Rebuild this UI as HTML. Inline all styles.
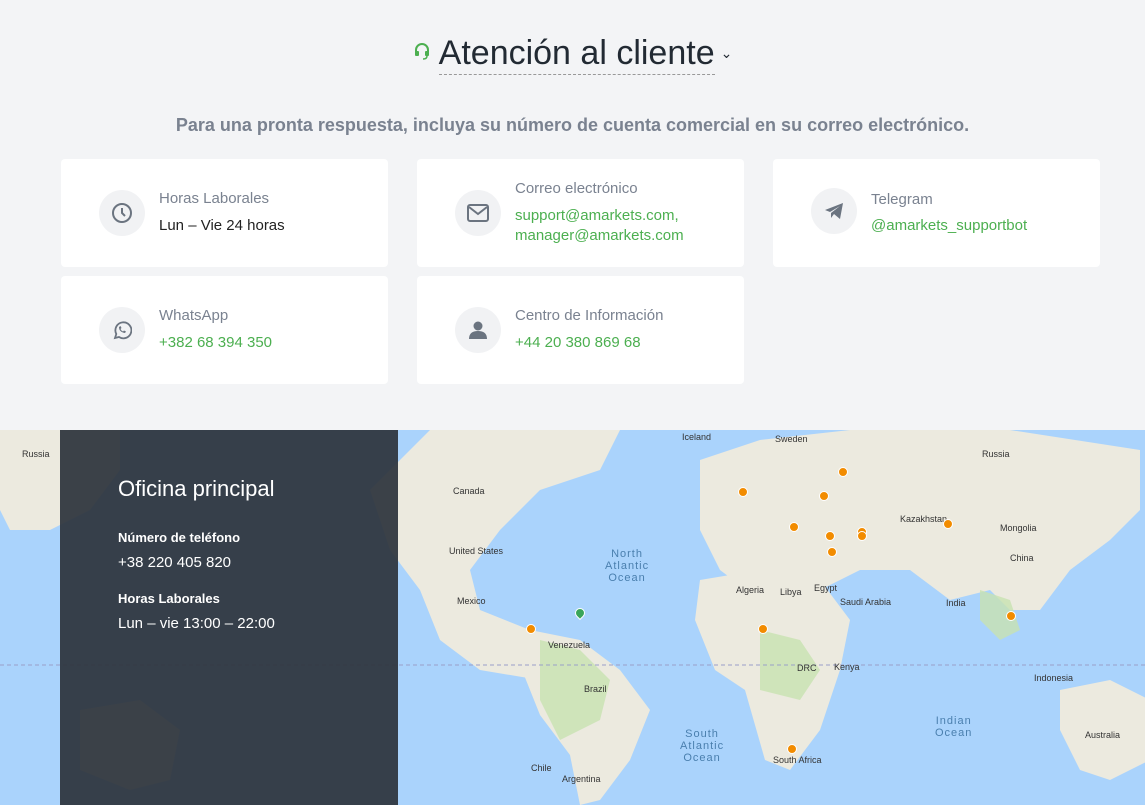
<!DOCTYPE html>
<html><head><meta charset="utf-8"><style>
*{box-sizing:border-box;margin:0;padding:0}
body{width:1145px;height:805px;overflow:hidden;background:#f3f4f6;font-family:"Liberation Sans",sans-serif;position:relative}
.title{position:absolute;top:34px;left:0;width:1145px;text-align:center;font-size:34px;color:#222a33}
.title span.t{border-bottom:1px dashed #999;padding-bottom:2px}
.sub{position:absolute;top:115px;width:1145px;text-align:center;font-size:18px;color:#7a8290;font-weight:bold}
.card{position:absolute;background:#fff;border-radius:4px;width:327px;height:108px}
.ic{position:absolute;left:38px;width:46px;height:46px;border-radius:50%;background:#f1f2f4;display:flex;align-items:center;justify-content:center}
.lab{position:absolute;left:98px;font-size:15px;color:#7a8290}
.val{position:absolute;left:98px;font-size:15px;line-height:20px;color:#222}
.g{color:#4caf50}
.map{position:absolute;top:430px;left:0;width:1145px;height:375px;background:#aad3fc;overflow:hidden}
.panel{position:absolute;top:430px;left:60px;width:338px;height:375px;background:rgba(45,52,60,.93);color:#fff}
.ml{position:absolute;font-size:9px;color:#333}
.ol{position:absolute;font-size:11px;color:#4a7fae;text-align:center;letter-spacing:1px}
.dot{position:absolute;width:10px;height:10px;border-radius:50%;background:#f28c00;border:1px solid #fff}
</style></head><body>
<div class="title"><svg width="18" height="18" viewBox="0 0 18 18" style="vertical-align:4px;margin-right:8px"><path d="M3 10V8a6 6 0 0112 0v2" fill="none" stroke="#4caf50" stroke-width="2"/><rect x="2" y="9" width="4" height="5" rx="1" fill="#4caf50"/><rect x="12" y="9" width="4" height="5" rx="1" fill="#4caf50"/><path d="M14 14q0 3-4 3" fill="none" stroke="#4caf50" stroke-width="1.5"/></svg><span class="t">Atención al cliente</span><span style="font-size:14px;vertical-align:6px;margin-left:6px">⌄</span></div>
<div class="sub">Para una pronta respuesta, incluya su número de cuenta comercial en su correo electrónico.</div>

<div class="card" style="left:61px;top:159px"><div class="ic" style="top:31px"><svg width="22" height="22" viewBox="0 0 22 22"><circle cx="11" cy="11" r="9" fill="none" stroke="#6b7480" stroke-width="2"/><path d="M11 6v5l3 3" fill="none" stroke="#6b7480" stroke-width="2"/></svg></div><div class="lab" style="top:31px">Horas Laborales</div><div class="val" style="top:57px">Lun – Vie 24 horas</div></div>
<div class="card" style="left:417px;top:159px"><div class="ic" style="top:31px"><svg width="22" height="18" viewBox="0 0 22 18"><rect x="1" y="1" width="20" height="16" rx="2" fill="none" stroke="#6b7480" stroke-width="2"/><path d="M2 3l9 7 9-7" fill="none" stroke="#6b7480" stroke-width="2"/></svg></div><div class="lab" style="top:21px">Correo electrónico</div><div class="val g" style="top:47px">support@amarkets.com,<br>manager@amarkets.com</div></div>
<div class="card" style="left:773px;top:159px"><div class="ic" style="top:29px"><svg width="20" height="18" viewBox="0 0 20 18"><path d="M1 8L19 1 16 17 10 12 7 16 7 11 16 4 6 10z" fill="#6b7480"/></svg></div><div class="lab" style="top:32px">Telegram</div><div class="val g" style="top:57px">@amarkets_supportbot</div></div>
<div class="card" style="left:61px;top:276px"><div class="ic" style="top:31px"><svg width="20" height="20" viewBox="0 0 20 20"><path d="M3 18l1.3-4A8 8 0 1 1 7 17z" fill="none" stroke="#6b7480" stroke-width="1.8"/><path d="M7 7q0 5 6 6l1-1.5-2-1-1 1q-2-1-2.5-2.5l1-1-1-2z" fill="#6b7480"/></svg></div><div class="lab" style="top:31px">WhatsApp</div><div class="val g" style="top:57px">+382 68 394 350</div></div>
<div class="card" style="left:417px;top:276px"><div class="ic" style="top:31px"><svg width="20" height="20" viewBox="0 0 20 20"><circle cx="10" cy="6" r="4.5" fill="#6b7480"/><path d="M1 19q0-8 9-8t9 8z" fill="#6b7480"/></svg></div><div class="lab" style="top:31px">Centro de Información</div><div class="val g" style="top:57px">+44 20 380 869 68</div></div>

<div class="map"><svg width="1145" height="375" viewBox="0 0 1145 375">
<g fill="#eceadf">
<path d="M430 0h190l-20 40-60 20-40 40-30 40 10 40 50 20 60 40-10 30-40-20-60-10-40-30-20-50-30-40-20-60z"/>
<path d="M530 200l50 10 40 30 30 40-20 50-30 40-20 5-10-50-30-40-20-50z"/>
<path d="M700 30l60-20 90-10 160 0 130 20v60l-30 30-40 30-30 40-30 0-20-20-40 10-40-30-50 0-40 20-60 10-40-30-20-40z"/>
<path d="M700 150l60-10 60 10 30 40-10 50-20 60-30 40-25-10-20-70-30-20-20-50z"/>
<path d="M1060 260l50-10 40 20v60l-40 20-30-10-20-40z"/>
<path d="M0 0h120v40l-30 40-40 20-40 0-10-20z"/>
<path d="M80 280l60-10 40 30-10 50-40 10-50-20z"/>
</g>
<g fill="#c8e2b0" opacity=".8"><path d="M540 210l40 10 30 30-10 40-40 20-20-40z"/><path d="M760 200l40 10 20 30-20 30-40-10z"/><path d="M980 160l30 10 10 30-20 10-20-20z"/></g>
<line x1="0" y1="235" x2="1145" y2="235" stroke="#9a9fc8" stroke-dasharray="4 3"/>
</svg>
<div class="ol" style="left:605px;top:118px">North<br>Atlantic<br>Ocean</div>
<div class="ol" style="left:680px;top:298px">South<br>Atlantic<br>Ocean</div>
<div class="ol" style="left:935px;top:285px">Indian<br>Ocean</div>
<div class="ml" style="left:682px;top:2px">Iceland</div><div class="ml" style="left:775px;top:4px">Sweden</div><div class="ml" style="left:982px;top:19px">Russia</div><div class="ml" style="left:22px;top:19px">Russia</div>
<div class="ml" style="left:453px;top:56px">Canada</div><div class="ml" style="left:449px;top:116px">United States</div><div class="ml" style="left:457px;top:166px">Mexico</div>
<div class="ml" style="left:900px;top:84px">Kazakhstan</div><div class="ml" style="left:1000px;top:93px">Mongolia</div><div class="ml" style="left:1010px;top:123px">China</div>
<div class="ml" style="left:736px;top:155px">Algeria</div><div class="ml" style="left:780px;top:157px">Libya</div><div class="ml" style="left:814px;top:153px">Egypt</div>
<div class="ml" style="left:840px;top:167px">Saudi Arabia</div><div class="ml" style="left:946px;top:168px">India</div><div class="ml" style="left:548px;top:210px">Venezuela</div><div class="ml" style="left:584px;top:254px">Brazil</div>
<div class="ml" style="left:797px;top:233px">DRC</div><div class="ml" style="left:834px;top:232px">Kenya</div><div class="ml" style="left:773px;top:325px">South Africa</div><div class="ml" style="left:1085px;top:300px">Australia</div><div class="ml" style="left:1034px;top:243px">Indonesia</div><div class="ml" style="left:531px;top:333px">Chile</div><div class="ml" style="left:562px;top:344px">Argentina</div>
<div class="dot" style="left:838px;top:37px"></div><div class="dot" style="left:738px;top:57px"></div><div class="dot" style="left:819px;top:61px"></div><div class="dot" style="left:789px;top:92px"></div><div class="dot" style="left:857px;top:97px"></div><div class="dot" style="left:857px;top:101px"></div><div class="dot" style="left:825px;top:101px"></div><div class="dot" style="left:943px;top:89px"></div><div class="dot" style="left:827px;top:117px"></div><div class="dot" style="left:526px;top:194px"></div><div class="dot" style="left:758px;top:194px"></div><div class="dot" style="left:1006px;top:181px"></div><div class="dot" style="left:787px;top:314px"></div>
<div class="dot" style="left:575px;top:178px;background:#3aa55a;border-radius:50% 50% 50% 0;transform:rotate(-45deg)"></div>
</div>
<div class="panel">
<div style="position:absolute;left:58px;top:46px;font-size:22px">Oficina principal</div>
<div style="position:absolute;left:58px;top:100px;font-size:13px;font-weight:bold">Número de teléfono</div>
<div style="position:absolute;left:58px;top:124px;font-size:15px">+38 220 405 820</div>
<div style="position:absolute;left:58px;top:161px;font-size:13px;font-weight:bold">Horas Laborales</div>
<div style="position:absolute;left:58px;top:185px;font-size:15px">Lun – vie 13:00 – 22:00</div>
</div>
</body></html>
